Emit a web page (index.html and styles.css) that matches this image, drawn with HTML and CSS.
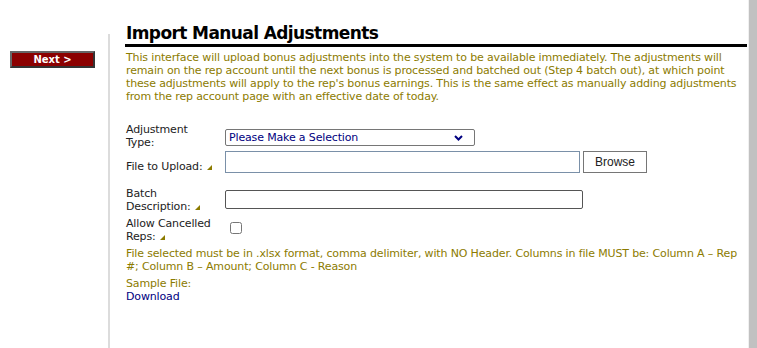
FILE: index.html
```html
<!DOCTYPE html>
<html lang="en">
<head>
    <meta charset="UTF-8">
    <title>Import Manual Adjustments</title>
    <link rel="stylesheet" href="styles.css">
</head>
<body>
    <div class="page">
        <div class="sidebar">
            <button type="button" class="next-button">Next &gt;</button>
        </div>

        <div class="content">
            <h1 class="page-title">Import Manual Adjustments</h1>
            <p class="intro">
                This interface will upload bonus adjustments into the system to be available immediately. The adjustments will remain on the rep account until the next bonus is processed and batched out (Step 4 batch out), at which point these adjustments will apply to the rep's bonus earnings. This is the same effect as manually adding adjustments from the rep account page with an effective date of today.
            </p>

            <form class="import-form">
                <div class="form-row row-type">
                    <label class="form-label" for="adj-type">Adjustment Type:</label>
                    <div class="form-field">
                        <span class="select-wrap">
                            <select id="adj-type" class="form-select">
                                <option>Please Make a Selection</option>
                            </select>
                            <svg class="select-arrow" width="9" height="6" viewBox="0 0 9 6">
                                <path d="M1 1 L4.5 4.5 L8 1" fill="none" stroke="#000080" stroke-width="2"/>
                            </svg>
                        </span>
                    </div>
                </div>
                <div class="form-row row-file">
                    <label class="form-label" for="upload-name">File to Upload: <span class="req"></span></label>
                    <div class="form-field">
                        <input type="text" id="upload-name" class="file-input">
                        <button type="button" class="browse-button">Browse</button>
                    </div>
                </div>
                <div class="form-row row-batch">
                    <label class="form-label" for="batch-desc">Batch Description: <span class="req"></span></label>
                    <div class="form-field">
                        <input type="text" id="batch-desc" class="text-input">
                    </div>
                </div>
                <div class="form-row row-reps">
                    <label class="form-label" for="allow-reps">Allow Cancelled Reps: <span class="req"></span></label>
                    <div class="form-field">
                        <input type="checkbox" id="allow-reps" class="form-check">
                    </div>
                </div>
            </form>

            <p class="note">File selected must be in .xlsx format, comma delimiter, with NO Header. Columns in file MUST be: Column A – Rep #; Column B – Amount; Column C - Reason</p>
            <div class="sample">
                <div class="note">Sample File:</div>
                <a href="#" class="download-link">Download</a>
            </div>
        </div>
    </div>
    <div class="scrollbar"></div>
</body>
</html>
```

FILE: styles.css
```css
* {
    margin: 0;
    padding: 0;
    box-sizing: border-box;
}

body {
    font-family: "DejaVu Sans", Verdana, sans-serif;
    font-size: 11px;
    letter-spacing: -0.15px;
    color: #222;
    background: white;
    overflow: hidden;
}

.page {
    display: flex;
    min-height: 348px;
}

.sidebar {
    width: 110px;
    margin-top: 34px;
    padding: 17px 0 0 10px;
    border-right: 2px solid #dcdcdc;
}

.next-button {
    display: block;
    width: 85px;
    height: 17px;
    background: #8b0000;
    color: white;
    font-family: "DejaVu Sans", Verdana, sans-serif;
    font-size: 10px;
    font-weight: bold;
    border: 2px solid;
    border-color: #666 #333 #333 #666;
    line-height: 12px;
}

.content {
    width: 622px;
    margin-left: 15px;
    padding-top: 22px;
}

.page-title {
    font-size: 17px;
    letter-spacing: -0.6px;
    font-weight: bold;
    color: #000;
    line-height: 22px;
    border-bottom: 3px solid #000;
    padding-left: 1px;
    margin-bottom: 4px;
}

.intro,
.note {
    color: #8c7b00;
    line-height: 13px;
    padding-left: 1px;
}

.import-form {
    margin-top: 20px;
    padding-left: 1px;
}

.form-row {
    display: grid;
    grid-template-columns: 99px 1fr;
    align-items: center;
    line-height: 13px;
}

.form-label {
    max-width: 90px;
}

.row-type {
    height: 26px;
    margin-top: 1px;
}

.row-type .form-field {
    padding-top: 2px;
}

.row-file {
    height: 22px;
    margin-top: 2px;
}

.row-file .form-label {
    padding-top: 8px;
}

.row-batch {
    height: 26px;
    margin-top: 12px;
}

.row-batch .form-label {
    padding-top: 2px;
}

.row-reps {
    height: 26px;
    margin-top: 6px;
}

.req {
    display: inline-block;
    width: 0;
    height: 0;
    border-left: 5px solid transparent;
    border-bottom: 5px solid #8c7b00;
    margin-left: 1px;
}

.form-field {
    display: flex;
    align-items: center;
    gap: 3px;
}

.select-wrap {
    position: relative;
    display: block;
}

.form-select {
    display: block;
    width: 250px;
    height: 17px;
    appearance: none;
    font-family: "DejaVu Sans", Verdana, sans-serif;
    font-size: 11px;
    letter-spacing: -0.15px;
    color: #000080;
    border: 1px solid #767676;
    border-radius: 2px;
    background: white;
    padding-left: 3px;
}

.select-arrow {
    position: absolute;
    right: 12px;
    top: 6px;
    pointer-events: none;
}

.file-input {
    width: 355px;
    height: 22px;
    border: 1px solid #7a90a8;
}

.browse-button {
    width: 64px;
    height: 22px;
    background: white;
    border: 1px solid #767676;
    font-family: "Liberation Sans", Arial, sans-serif;
    font-size: 12px;
    letter-spacing: 0;
    color: #222;
}

.text-input {
    width: 358px;
    height: 19px;
    border: 1px solid #555;
    border-radius: 2px;
}

.form-check {
    width: 12px;
    height: 12px;
    margin-left: 5px;
    margin-top: -5px;
}

.note {
    margin-top: 4px;
}

.sample {
    margin-top: 4px;
    padding-left: 1px;
}

.sample .note {
    padding-left: 0;
    margin-top: 0;
}

.download-link {
    color: #000080;
    text-decoration: none;
    line-height: 13px;
}

.scrollbar {
    position: fixed;
    top: 0;
    right: 0;
    width: 9px;
    height: 100%;
    background: #c1c1c1;
    border-left: 1px solid #f0f0f0;
}
```
